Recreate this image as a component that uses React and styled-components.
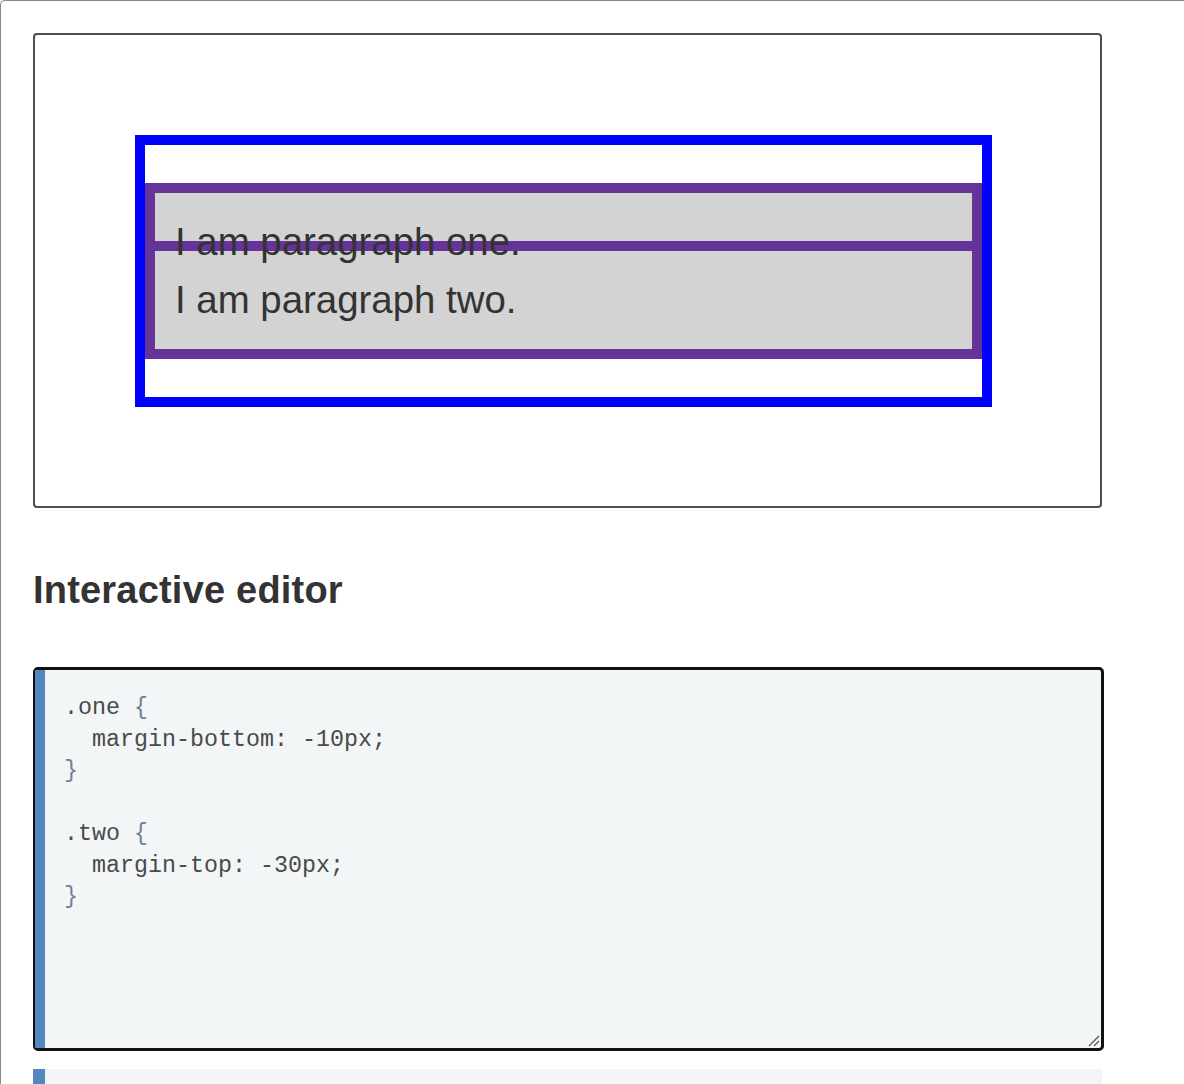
import React from "react";
import styled, { createGlobalStyle } from "styled-components";

const Global = createGlobalStyle`
  html, body { margin: 0; padding: 0; background: #fff; }
  body { font-family: "Liberation Sans", Arial, sans-serif; color: #333; }
`;

const Frame = styled.div`
  box-sizing: border-box;
  min-height: 1084px;
  border-top: 1px solid #8a8a8a;
  border-left: 1px solid #8a8a8a;
  border-top-left-radius: 5px;
  padding: 32px 0 0 32px;
  overflow: hidden;
`;

const Output = styled.section`
  box-sizing: border-box;
  width: 1069px;
  border: 2px solid #4d4e53;
  border-radius: 4px;
  padding: 100px 108px 99px 100px;
`;

const Container = styled.div`
  border: 10px solid #0000ff;
  padding: 38px 0;
`;

const Para = styled.p`
  margin: 0;
  margin-top: ${(p) => p.$top || 0}px;
  border: 10px solid #663399;
  background: #d3d3d3;
  padding: 20px 20px;
  font-size: 38.4px;
  line-height: 58px;
  color: #333;
`;

const Heading = styled.h2`
  margin: 60px 0 55px;
  font-size: 38px;
  letter-spacing: 0.2px;
  line-height: 44px;
  font-weight: 700;
  color: #333;
`;

const Editor = styled.div`
  position: relative;
  box-sizing: border-box;
  width: 1071px;
  height: 384px;
  border: 3px solid #111;
  border-left-width: 2px;
  border-radius: 5px;
  background: #f3f6f7;
  overflow: hidden;
`;

const Code = styled.pre`
  box-sizing: border-box;
  height: 100%;
  margin: 0;
  border-left: 10px solid #5288bd;
  padding: 23px 0 0 19px;
  font-family: "Liberation Mono", "Courier New", monospace;
  font-size: 23.33px;
  line-height: 31.5px;
  color: #4a4a4a;
`;

const Brace = styled.span`
  color: #6f8294;
`;

const Grip = styled.svg`
  position: absolute;
  right: 1px;
  bottom: 1px;
  width: 14px;
  height: 14px;
`;

const NextBox = styled.div`
  width: 1069px;
  height: 60px;
  margin-top: 18px;
  box-sizing: border-box;
  border-left: 12px solid #5288bd;
  background: #f3f6f7;
`;

export default function App() {
  return (
    <>
      <Global />
      <Frame>
        <Output>
          <Container>
            <Para>I am paragraph one.</Para>
            <Para $top={-60}>I am paragraph two.</Para>
          </Container>
        </Output>
        <Heading>Interactive editor</Heading>
        <Editor>
          <Code>
            {".one "}
            <Brace>{"{"}</Brace>
            {"\n  margin-bottom: -10px;\n"}
            <Brace>{"}"}</Brace>
            {"\n\n.two "}
            <Brace>{"{"}</Brace>
            {"\n  margin-top: -30px;\n"}
            <Brace>{"}"}</Brace>
          </Code>
          <Grip viewBox="0 0 14 14">
            <line x1="13" y1="3" x2="3" y2="13" stroke="#555" strokeWidth="1.2" />
            <line x1="13" y1="8" x2="8" y2="13" stroke="#555" strokeWidth="1.2" />
          </Grip>
        </Editor>
        <NextBox />
      </Frame>
    </>
  );
}
